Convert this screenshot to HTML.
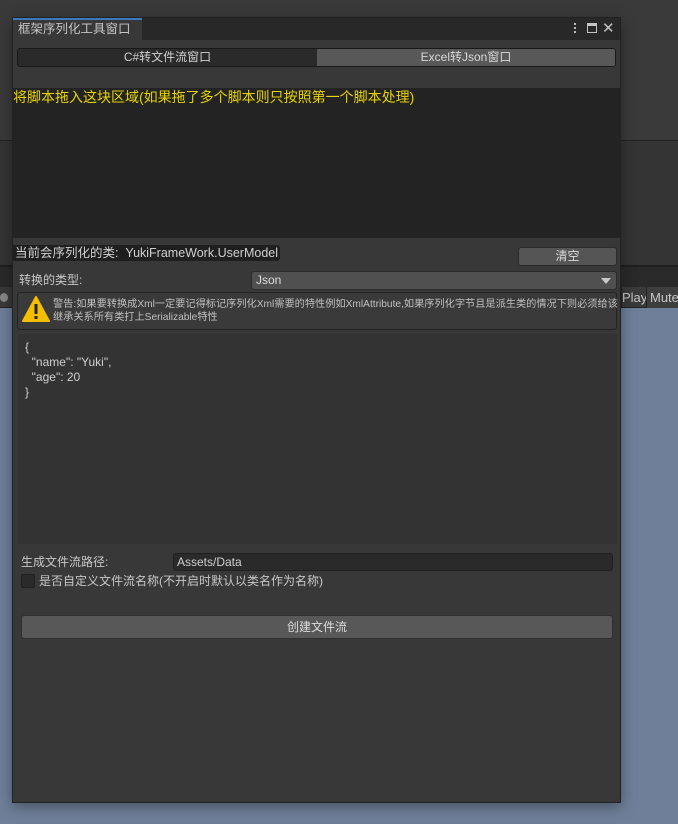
<!DOCTYPE html>
<html><head><meta charset="utf-8"><style>
*{margin:0;padding:0;box-sizing:border-box}
body{width:678px;height:824px;position:relative;overflow:hidden;background:#6f7f99;font-family:"Liberation Sans","Noto Sans CJK SC",sans-serif;font-size:12px;color:#c8c8c8}
.a{position:absolute}
</style></head><body>
<div class="a" style="left:0;top:0;width:678px;height:140px;background:#3a3a3a"></div>
<div class="a" style="left:0;top:140px;width:678px;height:1px;background:#222"></div>
<div class="a" style="left:0;top:141px;width:678px;height:124px;background:#343434"></div>
<div class="a" style="left:0;top:265px;width:678px;height:2px;background:#1e1e1e"></div>
<div class="a" style="left:0;top:267px;width:678px;height:20px;background:#2a2a2a"></div>
<div class="a" style="left:0;top:287px;width:678px;height:21px;background:#3a3a3a;border-bottom:1px solid #222"></div>
<div class="a" style="left:0;top:293px;width:8px;height:9px;border-radius:50%;background:#888"></div>
<div class="a" style="left:621px;top:287px;width:25px;height:21px;border-left:1px solid #222;font-size:13px;line-height:21px;color:#c8c8c8">Play</div>
<div class="a" style="left:646px;top:287px;width:40px;height:21px;border-left:1px solid #222;font-size:13px;line-height:21px;padding-left:3px;color:#c8c8c8;background:#3e3e3e">Mute</div>

<div class="a" style="left:12px;top:17px;width:609px;height:786px;background:#383838;box-shadow:0 4px 14px rgba(0,0,0,.35);border:1px solid #222">
 <div class="a" style="left:0;top:0;width:607px;height:22px;background:#282828"></div>
 <div class="a" style="left:0;top:0;width:129px;height:22px;background:#383838;border-top:2px solid #3a79bb;color:#c4c4c4;font-size:12.5px;line-height:19px;padding-left:5px">框架序列化工具窗口</div>
 <div class="a" style="left:561px;top:5px;width:2px;height:2px;background:#bbb;box-shadow:0 4px #bbb,0 8px #bbb"></div>
 <div class="a" style="left:574px;top:5px;width:10px;height:10px;border:1.5px solid #c4c4c4;border-top-width:3px"></div>
 <div class="a" style="left:589px;top:1px;font-size:15px;color:#c4c4c4;line-height:20px">✕</div>
 <div class="a" style="left:4px;top:30px;width:599px;height:19px;border:1px solid #191919;border-radius:3px;overflow:hidden;display:flex;font-size:12px;line-height:17px;text-align:center">
  <div style="width:299px;background:#2a2a2a;color:#d0d0d0">C#转文件流窗口</div>
  <div style="flex:1;background:#585858;color:#d8d8d8">Excel转Json窗口</div>
 </div>
 <div class="a" style="left:0;top:70px;width:607px;height:150px;background:#232323"></div>
 <div class="a" style="left:0;top:71px;color:#e8d400;font-size:14px;line-height:17px">将脚本拖入这块区域(如果拖了多个脚本则只按照第一个脚本处理)</div>
 <div class="a" style="left:0;top:227px;height:16px;background:#1f1f1f;border-radius:0 3px 3px 0;padding:0 2px;font-size:12.5px;line-height:16px;color:#d0d0d0">当前会序列化的类:&nbsp;&nbsp;YukiFrameWork.UserModel</div>
 <div class="a" style="left:505px;top:229px;width:99px;height:19px;background:#555;border:1px solid #2a2a2a;border-radius:3px;text-align:center;line-height:17px;color:#ddd;font-size:12px">清空</div>
 <div class="a" style="left:6px;top:254px;font-size:12px;line-height:16px;color:#c8c8c8">转换的类型:</div>
 <div class="a" style="left:238px;top:253px;width:366px;height:19px;background:#505050;border:1px solid #2a2a2a;border-radius:3px;padding-left:4px;line-height:17px;font-size:12px;color:#ddd">Json
  <div class="a" style="right:5px;top:6px;width:0;height:0;border-left:5px solid transparent;border-right:5px solid transparent;border-top:6px solid #c8c8c8"></div></div>
 <div class="a" style="left:4px;top:274px;width:600px;height:38px;background:#3a3a3a;border:1px solid #232323;border-radius:3px"></div>
 <svg class="a" style="left:9px;top:278px" width="28" height="26" viewBox="0 0 28 26"><path d="M14 1 L27 25 L1 25 Z" fill="#f5bd00" stroke="#f5bd00" stroke-linejoin="round" stroke-width="2"/><rect x="12.5" y="8" width="3" height="10" fill="#222"/><rect x="12.5" y="20" width="3" height="3" fill="#222"/></svg>
 <div class="a" style="left:40px;top:280px;width:566px;font-size:10.2px;line-height:13px;color:#c0c0c0">警告:如果要转换成Xml一定要记得标记序列化Xml需要的特性例如XmlAttribute,如果序列化字节且是派生类的情况下则必须给该继承关系所有类打上Serializable特性</div>
 <div class="a" style="left:5px;top:316px;width:599px;height:210px;background:#333"></div>
 <div class="a" style="left:12px;top:322px;font-size:12px;line-height:15px;color:#d0d0d0;white-space:pre">{
  "name": "Yuki",
  "age": 20
}</div>
 <div class="a" style="left:8px;top:536px;font-size:12px;line-height:16px;color:#c8c8c8">生成文件流路径:</div>
 <div class="a" style="left:160px;top:535px;width:440px;height:18px;background:#2a2a2a;border:1px solid #202020;border-radius:3px;padding-left:3px;font-size:12px;line-height:16px;color:#d0d0d0">Assets/Data</div>
 <div class="a" style="left:8px;top:556px;width:14px;height:14px;background:#2a2a2a;border:1px solid #202020;border-radius:2px"></div>
 <div class="a" style="left:26px;top:556px;font-size:12px;line-height:15px;color:#c8c8c8">是否自定义文件流名称(不开启时默认以类名作为名称)</div>
 <div class="a" style="left:8px;top:597px;width:592px;height:24px;background:#585858;border:1px solid #2f2f2f;border-radius:3px;text-align:center;line-height:22px;color:#ddd;font-size:12px">创建文件流</div>
</div>
</body></html>
